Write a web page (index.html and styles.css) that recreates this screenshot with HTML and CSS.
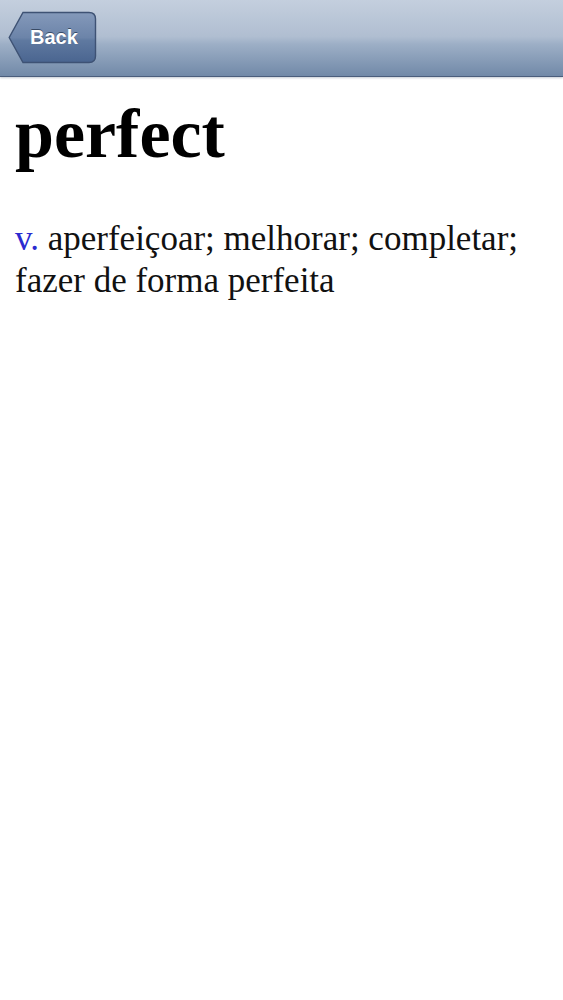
FILE: index.html
```html
<!DOCTYPE html>
<html>
<head>
<meta charset="utf-8">
<link rel="stylesheet" href="styles.css">
</head>
<body>
<header class="navbar">
  <a class="back">
    <svg class="back-shape" width="89" height="53" viewBox="0 0 89 53">
      <defs>
        <linearGradient id="bg" x1="0" y1="0" x2="0" y2="1">
          <stop offset="0" stop-color="#8499ba"/>
          <stop offset="0.5" stop-color="#6c84a9"/>
          <stop offset="0.56" stop-color="#5f79a0"/>
          <stop offset="1" stop-color="#4a6590"/>
        </linearGradient>
      </defs>
      <path d="M15 1.5 H81 Q87.5 1.5 87.5 8 V45 Q87.5 51.5 81 51.5 H15 L1.2 26.5 Z" fill="url(#bg)" stroke="#3e5274" stroke-width="1.4"/>
    </svg>
    <span class="back-label">Back</span>
  </a>
</header>
<main class="content">
  <h1 class="word">perfect</h1>
  <p class="def"><span class="pos">v.</span> aperfeiçoar; melhorar; completar; fazer de forma perfeita</p>
</main>
</body>
</html>
```
FILE: styles.css
```css
html, body {
  margin: 0;
  padding: 0;
  background: #ffffff;
}
body {
  width: 563px;
  min-height: 1000px;
}
.navbar {
  height: 77px;
  box-sizing: border-box;
  background: linear-gradient(to bottom, #c4cfde 0%, #b0bed1 48%, #9dafc6 58%, #7189a8 100%);
  border-bottom: 1px solid #4a5d7c;
  box-shadow: 0 1px 2px rgba(60, 80, 110, 0.3);
  display: flex;
  align-items: flex-start;
  padding: 11px 0 0 8px;
}
.back {
  position: relative;
  display: flex;
  align-items: center;
  width: 89px;
  height: 53px;
  text-decoration: none;
}
.back-shape {
  position: absolute;
  left: 0;
  top: 0;
}
.back-label {
  position: relative;
  font-family: "Liberation Sans", Arial, sans-serif;
  font-weight: bold;
  font-size: 20px;
  color: #ffffff;
  text-shadow: 0 -1px 0 rgba(30, 45, 70, 0.7);
  padding-left: 22px;
}
.content {
  padding: 0 15px;
}
.word {
  margin: 17px 0 0 0;
  font-family: "Liberation Serif", "Times New Roman", serif;
  font-weight: bold;
  font-size: 70px;
  line-height: 80px;
  color: #000000;
}
.def {
  margin: 44px 0 0 0;
  font-family: "Liberation Serif", "Times New Roman", serif;
  font-size: 35px;
  line-height: 42px;
  color: #111111;
}
.pos {
  color: #2b2bd0;
}
```
